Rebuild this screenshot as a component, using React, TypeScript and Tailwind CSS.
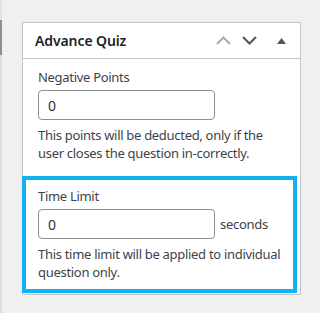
export default function App() {
  return (
    <div
      className="relative h-[313px] w-[320px] overflow-hidden bg-[#f0f0f1] text-[#3c434a]"
      style={{ fontFamily: '"Noto Sans", "Open Sans", sans-serif' }}
    >
      <div className="absolute left-0 top-0 flex h-full w-[2px] flex-col">
        <div className="h-[20px] bg-[#e2e2e4]" />
        <div className="h-[35px] bg-[#8c8f94]" />
        <div className="flex-1 bg-[#dcdcde]" />
      </div>
      <div className="ml-[22px] mt-[22px] w-[279px] border border-[#c3c4c7] bg-white">
        <div className="flex h-[36px] items-center justify-between border-b border-[#c3c4c7] pl-[12px] pr-[14px]">
          <h2 className="text-[14px] font-semibold tracking-[-0.1px] text-[#1d2327]">Advance Quiz</h2>
          <div className="flex items-center">
            <svg width="15" height="9" viewBox="0 0 15 9" className="mr-[11px]">
              <path d="M1 8 L7.5 1.5 L14 8" fill="none" stroke="#a7aaad" strokeWidth="2" />
            </svg>
            <svg width="15" height="9" viewBox="0 0 15 9" className="mr-[20px]">
              <path d="M1 1 L7.5 7.5 L14 1" fill="none" stroke="#50575e" strokeWidth="2" />
            </svg>
            <svg width="9" height="6" viewBox="0 0 9 6">
              <path d="M0 6 L4.5 0 L9 6 Z" fill="#50575e" />
            </svg>
          </div>
        </div>
        <div className="px-[15px] pt-[9px] pb-[14px] text-[13px] leading-[18px] tracking-[-0.3px]">
          <label className="block">Negative Points</label>
          <input
            defaultValue="0"
            className="mt-[4px] block h-[30px] w-[177px] rounded-[4px] border border-[#8c8f94] px-[9px] text-[14px] text-[#2c3338] outline-none"
          />
          <p className="mt-[6px]">
            This points will be deducted, only if the user closes the question in-correctly.
          </p>
        </div>
        <div className="-ml-px mb-px w-[275px] border-[4px] border-[#12b2ee] px-[12px] pt-[7px] pb-[8px] text-[13px] leading-[18px] tracking-[-0.3px]">
          <label className="block">Time Limit</label>
          <div className="mt-[4px] flex items-center">
            <input
              defaultValue="0"
              className="block h-[30px] w-[177px] rounded-[4px] border border-[#8c8f94] px-[9px] text-[14px] text-[#2c3338] outline-none"
            />
            <span className="ml-[5px] text-[13px]">seconds</span>
          </div>
          <p className="mt-[6px]">
            This time limit will be applied to individual question only.
          </p>
        </div>
      </div>
    </div>
  );
}
